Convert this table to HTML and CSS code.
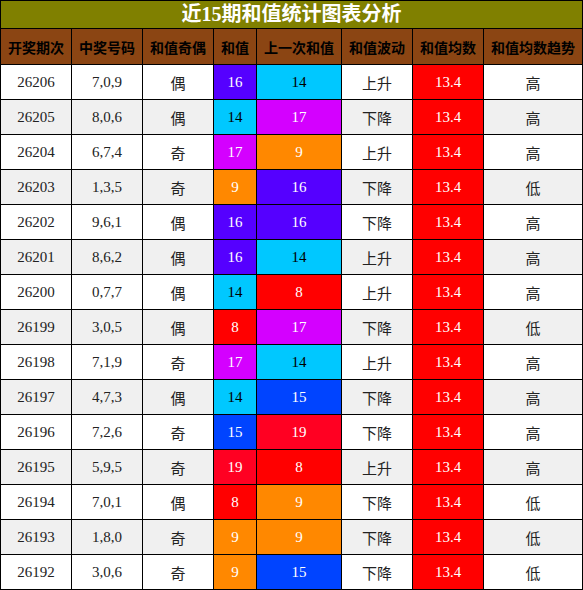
FILE: index.html
```html
<!DOCTYPE html>
<html lang="zh">
<head>
    <meta charset="UTF-8">
    <title>近15期和值统计图表分析</title>
    <link rel="stylesheet" href="styles.css">
</head>
<body>
    <table class="stat">
        <colgroup>
            <col class="w71"><col class="w71"><col class="w71"><col class="w43">
            <col class="w85"><col class="w71"><col class="w71"><col class="w99">
        </colgroup>
        <thead>
            <tr><th colspan="8" class="title">近15期和值统计图表分析</th></tr>
            <tr class="head">
                <th>开奖期次</th><th>中奖号码</th><th>和值奇偶</th><th>和值</th>
                <th>上一次和值</th><th>和值波动</th><th>和值均数</th><th>和值均数趋势</th>
            </tr>
        </thead>
        <tbody id="rows"></tbody>
    </table>
    <script>
        // 期次, 号码, 奇偶, 和值, 上一次和值, 波动, 趋势
        const data = [
            ["26206", "7,0,9", "偶", 16, 14, "上升", "高"],
            ["26205", "8,0,6", "偶", 14, 17, "下降", "高"],
            ["26204", "6,7,4", "奇", 17, 9, "上升", "高"],
            ["26203", "1,3,5", "奇", 9, 16, "下降", "低"],
            ["26202", "9,6,1", "偶", 16, 16, "下降", "高"],
            ["26201", "8,6,2", "偶", 16, 14, "上升", "高"],
            ["26200", "0,7,7", "偶", 14, 8, "上升", "高"],
            ["26199", "3,0,5", "偶", 8, 17, "下降", "低"],
            ["26198", "7,1,9", "奇", 17, 14, "上升", "高"],
            ["26197", "4,7,3", "偶", 14, 15, "下降", "高"],
            ["26196", "7,2,6", "奇", 15, 19, "下降", "高"],
            ["26195", "5,9,5", "奇", 19, 8, "上升", "高"],
            ["26194", "7,0,1", "偶", 8, 9, "下降", "低"],
            ["26193", "1,8,0", "奇", 9, 9, "下降", "低"],
            ["26192", "3,0,6", "奇", 9, 15, "下降", "低"]
        ];

        let html = "";
        data.forEach(function (r) {
            html += "<tr>" +
                "<td class='num'>" + r[0] + "</td>" +
                "<td class='num'>" + r[1] + "</td>" +
                "<td class='zh'>" + r[2] + "</td>" +
                "<td class='num v" + r[3] + "'>" + r[3] + "</td>" +
                "<td class='num v" + r[4] + "'>" + r[4] + "</td>" +
                "<td class='zh'>" + r[5] + "</td>" +
                "<td class='num avg'>13.4</td>" +
                "<td class='zh'>" + r[6] + "</td>" +
                "</tr>";
        });
        document.getElementById("rows").innerHTML = html;
    </script>
</body>
</html>
```

FILE: styles.css
```css
body {
    margin: 0;
    background-color: #fff;
    font-family: "Liberation Serif", "Noto Sans CJK SC", serif;
}

.stat {
    border-collapse: collapse;
    table-layout: fixed;
    width: 583px;
}

.w71 { width: 71px; }
.w43 { width: 43px; }
.w85 { width: 85px; }
.w99 { width: 99px; }

.stat th,
.stat td {
    border: 1px solid #000;
    padding: 0;
    text-align: center;
}

.title {
    background-color: #808000;
    color: #fff;
    font-size: 20px;
    font-weight: bold;
    height: 27px;
    line-height: 27px;
}

.head th {
    background-color: #8b4513;
    color: #000;
    font-family: "Noto Sans CJK SC", sans-serif;
    font-size: 14px;
    font-weight: bold;
    height: 35px;
}

.stat td {
    height: 34px;
    color: #222;
    font-size: 15px;
}

.stat tbody tr:nth-child(even) td {
    background-color: #f0f0f0;
}

.zh {
    font-family: "Noto Sans CJK SC", sans-serif;
    color: #000;
}

.stat tbody tr td.avg { background-color: #ff0000; color: #fff; }
.stat tbody tr td.v8 { background-color: #ff0000; color: #fff; }
.stat tbody tr td.v9 { background-color: #ff8800; color: #fff; }
.stat tbody tr td.v14 { background-color: #00c8ff; color: #000; }
.stat tbody tr td.v15 { background-color: #0044ff; color: #fff; }
.stat tbody tr td.v16 { background-color: #5500ff; color: #fff; }
.stat tbody tr td.v17 { background-color: #d400ff; color: #fff; }
.stat tbody tr td.v19 { background-color: #ff0022; color: #fff; }
```
